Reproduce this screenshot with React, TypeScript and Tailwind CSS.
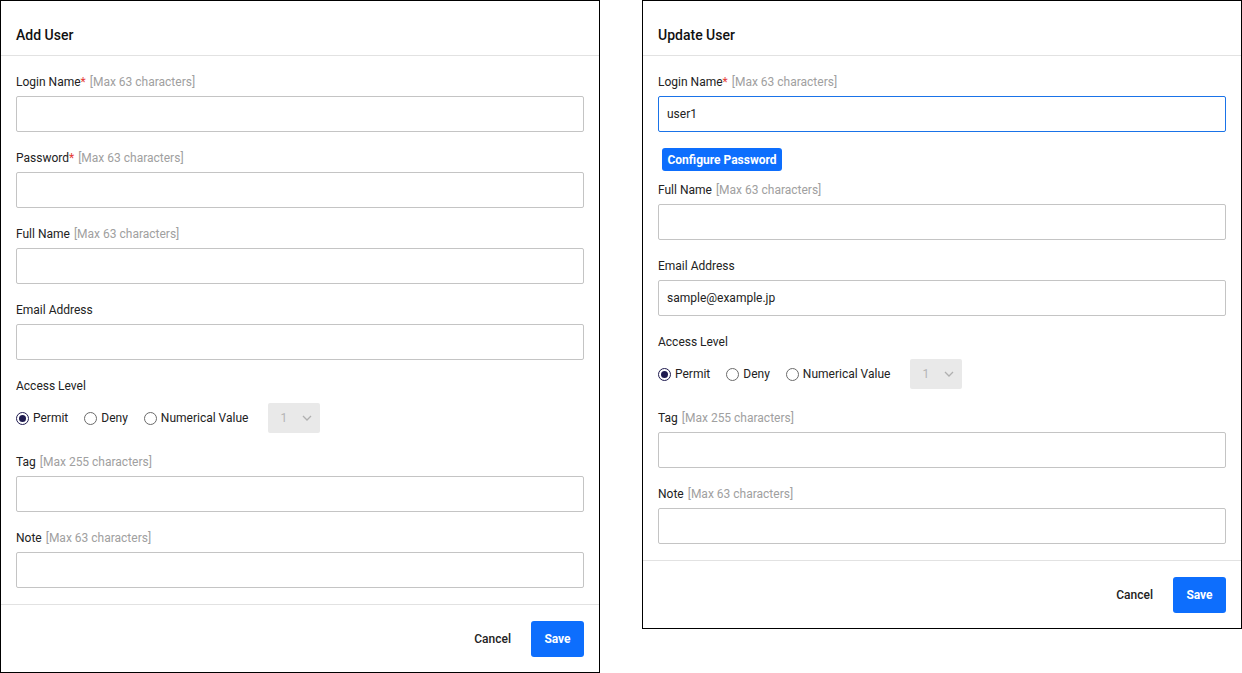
import React from "react";

const font = { fontFamily: "Roboto, 'Noto Sans', sans-serif" };

function Label({ text, required, hint }: { text: string; required?: boolean; hint?: string }) {
  return (
    <div className="h-[18px] text-[12px] leading-[18px] text-[#222]">
      {text}
      {required && <span className="text-[#e53935]">*</span>}
      {hint && <span className="ml-1 text-[#a0a0a0]">{hint}</span>}
    </div>
  );
}

function Field({
  text,
  required,
  hint,
  value,
  focused,
  last,
}: {
  text: string;
  required?: boolean;
  hint?: string;
  value?: string;
  focused?: boolean;
  last?: boolean;
}) {
  return (
    <div className={last ? "" : "mb-[17px]"}>
      <Label text={text} required={required} hint={hint} />
      <div
        className={`mt-[5px] flex h-[36px] items-center rounded-[2px] border px-[8px] text-[12px] text-[#222] ${
          focused ? "border-[#1a73e8]" : "border-[#c4c4c4]"
        }`}
      >
        {value}
      </div>
    </div>
  );
}

function Radio({ checked, label }: { checked?: boolean; label: string }) {
  return (
    <div className="flex items-center gap-[4px]">
      <span
        className={`flex h-[13px] w-[13px] items-center justify-center rounded-full border ${
          checked ? "border-[#1f1b4f]" : "border-[#6b6b6b]"
        }`}
      >
        {checked && <span className="h-[7px] w-[7px] rounded-full bg-[#1f1b4f]" />}
      </span>
      <span className="text-[12px] text-[#222]">{label}</span>
    </div>
  );
}

function AccessLevel() {
  return (
    <div className="mb-[20px]">
      <Label text="Access Level" />
      <div className="mt-[8px] flex h-[30px] items-center">
        <div className="flex items-center gap-[16px]">
          <Radio checked label="Permit" />
          <Radio label="Deny" />
          <Radio label="Numerical Value" />
        </div>
        <div className="ml-[20px] flex h-[30px] w-[52px] items-center justify-between rounded-[2px] bg-[#e9e9e9] pl-[12px] pr-[8px] text-[12px] text-[#b5b5b5]">
          <span>1</span>
          <svg width="10" height="6" viewBox="0 0 10 6" fill="none">
            <path d="M1 1l4 4 4-4" stroke="#b0b0b0" strokeWidth="1.3" />
          </svg>
        </div>
      </div>
    </div>
  );
}

function Footer() {
  return (
    <div className="flex items-center justify-end gap-[20px] border-t border-[#e2e2e2] px-[15px] pb-[15px] pt-[16px]">
      <span className="text-[12px] font-medium text-[#222]">Cancel</span>
      <div className="flex h-[36px] w-[53px] items-center justify-center rounded-[3px] bg-[#0d6efd] text-[12px] font-bold text-white">
        Save
      </div>
    </div>
  );
}

function Header({ title }: { title: string }) {
  return (
    <div className="flex h-[55px] items-end border-b border-[#e2e2e2] px-[15px] pb-[9px]">
      <span className="text-[14px] font-medium text-[#111]">{title}</span>
    </div>
  );
}

function AddUser() {
  return (
    <div className="w-[600px] border border-black bg-white">
      <Header title="Add User" />
      <div className="px-[15px] pb-[16px] pt-[17px]">
        <Field text="Login Name" required hint="[Max 63 characters]" />
        <Field text="Password" required hint="[Max 63 characters]" />
        <Field text="Full Name" hint="[Max 63 characters]" />
        <Field text="Email Address" />
        <AccessLevel />
        <Field text="Tag" hint="[Max 255 characters]" />
        <Field text="Note" hint="[Max 63 characters]" last />
      </div>
      <Footer />
    </div>
  );
}

function UpdateUser() {
  return (
    <div className="w-[600px] border border-black bg-white">
      <Header title="Update User" />
      <div className="px-[15px] pb-[16px] pt-[17px]">
        <div className="mb-[16px]">
          <Label text="Login Name" required hint="[Max 63 characters]" />
          <div className="mt-[5px] flex h-[36px] items-center rounded-[2px] border border-[#1a73e8] px-[8px] text-[12px] text-[#222]">
            user1
          </div>
        </div>
        <div className="mb-[10px] ml-[4px] flex h-[23px] w-[120px] items-center justify-center rounded-[3px] bg-[#0d6efd] text-[12px] font-bold text-white">
          Configure Password
        </div>
        <Field text="Full Name" hint="[Max 63 characters]" />
        <Field text="Email Address" value="sample@example.jp" />
        <AccessLevel />
        <Field text="Tag" hint="[Max 255 characters]" />
        <Field text="Note" hint="[Max 63 characters]" last />
      </div>
      <Footer />
    </div>
  );
}

export default function App() {
  return (
    <div className="flex h-[673px] w-[1242px] items-start gap-[42px] bg-white" style={font}>
      <AddUser />
      <UpdateUser />
    </div>
  );
}
